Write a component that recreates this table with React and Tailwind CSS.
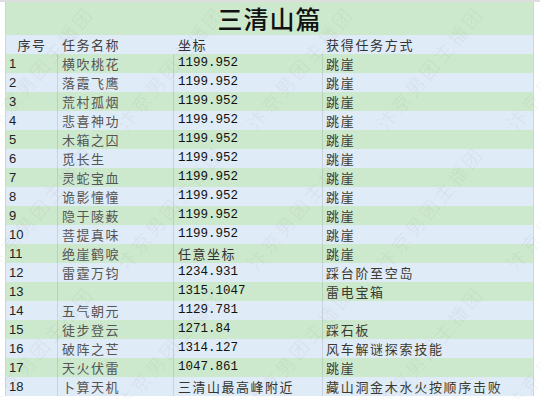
import React from "react";

const rows = [
  ["1", "横吹桃花", "1199.952", "跳崖"],
  ["2", "落霞飞鹰", "1199.952", "跳崖"],
  ["3", "荒村孤烟", "1199.952", "跳崖"],
  ["4", "悲喜神功", "1199.952", "跳崖"],
  ["5", "木箱之囚", "1199.952", "跳崖"],
  ["6", "觅长生", "1199.952", "跳崖"],
  ["7", "灵蛇宝血", "1199.952", "跳崖"],
  ["8", "诡影憧憧", "1199.952", "跳崖"],
  ["9", "隐于陵薮", "1199.952", "跳崖"],
  ["10", "菩提真味", "1199.952", "跳崖"],
  ["11", "绝崖鹤唳", "任意坐标", "跳崖"],
  ["12", "雷霆万钧", "1234.931", "踩台阶至空岛"],
  ["13", "", "1315.1047", "雷电宝箱"],
  ["14", "五气朝元", "1129.781", ""],
  ["15", "徒步登云", "1271.84", "踩石板"],
  ["16", "破阵之芒", "1314.127", "风车解谜探索技能"],
  ["17", "天火伏雷", "1047.861", "跳崖"],
  ["18", "卜算天机", "三清山最高峰附近", "藏山洞金木水火按顺序击败"],
];

const isNum = (s) => /^[0-9.]+$/.test(s);

const marks = [];
for (let j = 0; j < 3; j++) {
  for (let i = 0; i < 5; i++) {
    marks.push({ x: 40 + 130 * i, y: 68 + 140 * j });
  }
}

function Coord({ v }) {
  if (isNum(v)) {
    return (
      <span className="font-['Liberation_Mono',monospace] text-[12.5px] text-[#111]">
        {v}
      </span>
    );
  }
  return (
    <span className="font-['Noto_Sans_CJK_SC',sans-serif] text-[13px] tracking-[1.5px] text-[#333]">
      {v}
    </span>
  );
}

export default function App() {
  return (
    <div className="relative w-[540px] h-[399px] bg-white overflow-hidden font-['Noto_Sans_CJK_SC',sans-serif]">
      <div className="h-[2px] w-full bg-[#dedede]" />
      <div className="ml-[5px] w-[529px] border-l border-r border-[#d4d4d4]">
        <div className="h-[33px] bg-[#cde9cd] flex items-center justify-center">
          <span className="text-[25px] font-medium tracking-[1px] text-[#111] leading-none">
            三清山篇
          </span>
        </div>
        <div className="h-[19px] bg-[#dfebf7] flex items-center text-[13px] text-[#333] leading-none">
          <div className="w-[52px] text-center tracking-[1.5px]">序号</div>
          <div className="w-[116px] pl-[4px] tracking-[1.5px] text-[#444]">任务名称</div>
          <div className="w-[149px] pl-[4px] tracking-[1.5px]">坐标</div>
          <div className="flex-1 pl-[3px] tracking-[1.7px]">获得任务方式</div>
        </div>
        {rows.map((r, idx) => (
          <div
            key={idx}
            className={
              "h-[19px] flex items-stretch leading-none " +
              (idx % 2 === 0 ? "bg-[#cde9cd]" : "bg-[#dfebf7]")
            }
          >
            <div className="w-[52px] pl-[3px] flex items-center border-r border-[rgba(0,0,0,0.1)] font-['Liberation_Sans',sans-serif] text-[13px] text-[#222]">
              {r[0]}
            </div>
            <div className="w-[116px] pl-[4px] flex items-center border-r border-[rgba(0,0,0,0.1)] text-[13px] tracking-[1.5px] text-[#555]">
              {r[1]}
            </div>
            <div className="w-[149px] pl-[4px] flex items-center border-r border-[rgba(0,0,0,0.1)]">
              <Coord v={r[2]} />
            </div>
            <div className="flex-1 pl-[3px] flex items-center text-[13px] tracking-[1.7px] text-[#3a3a30]">
              {r[3]}
            </div>
          </div>
        ))}
      </div>
      <div className="pointer-events-none absolute inset-0">
        {marks.map((m, k) => (
          <span
            key={k}
            className="absolute -translate-x-1/2 -translate-y-1/2 -rotate-[50deg] whitespace-nowrap text-[19px] tracking-[3px] text-[rgba(0,0,0,0.05)]"
            style={{ left: m.x, top: m.y }}
          >
            汴京男团主播团
          </span>
        ))}
      </div>
    </div>
  );
}
